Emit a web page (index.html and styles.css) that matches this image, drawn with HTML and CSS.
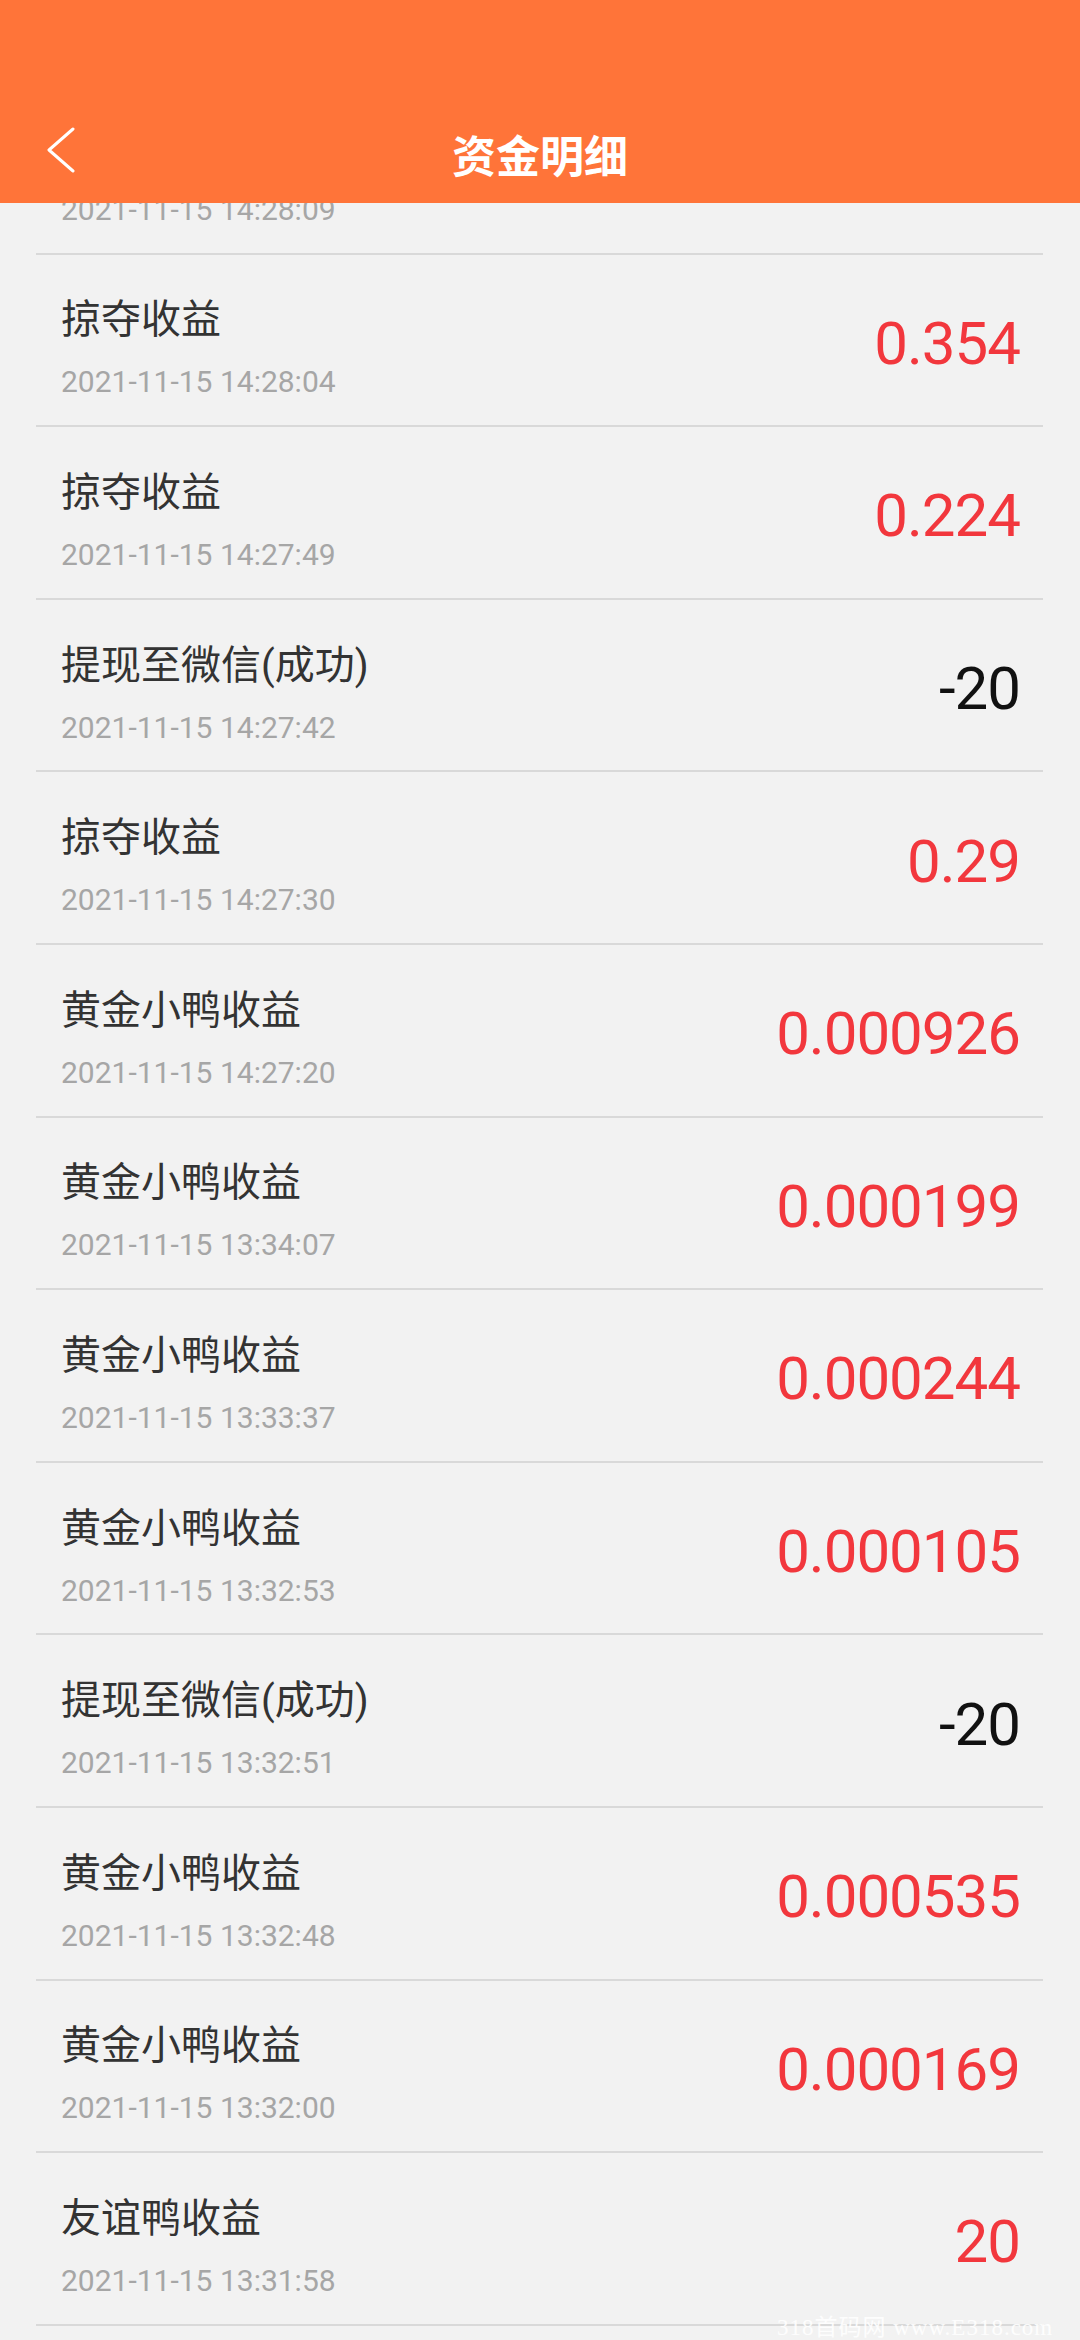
FILE: index.html
```html
<!DOCTYPE html>
<html lang="zh-CN">
<head>
  <meta charset="UTF-8">
  <meta name="viewport" content="width=device-width, initial-scale=1.0">
  <title>资金明细</title>
  <link rel="stylesheet" href="styles.css">
</head>
<body>

<!-- Top bar -->
<header class="header">
  <div class="nav-bar">
    <div class="back">
      <svg width="30" height="46" viewBox="0 0 30 46">
        <polyline points="27,2 3,23 27,44" fill="none" stroke="#fff" stroke-width="3" stroke-linecap="round" stroke-linejoin="round"/>
      </svg>
    </div>
    <h1 class="title">资金明细</h1>
    <div></div>
  </div>
</header>

<!-- Records list (scrolled) -->
<div class="scroll">
  <ul class="list">
    <li class="row">
      <div class="info"><div class="name">掠夺收益</div><div class="time">2021-11-15 14:28:09</div></div>
      <div class="amount plus">0.312</div>
    </li>
    <li class="row">
      <div class="info"><div class="name">掠夺收益</div><div class="time">2021-11-15 14:28:04</div></div>
      <div class="amount plus">0.354</div>
    </li>
    <li class="row">
      <div class="info"><div class="name">掠夺收益</div><div class="time">2021-11-15 14:27:49</div></div>
      <div class="amount plus">0.224</div>
    </li>
    <li class="row">
      <div class="info"><div class="name">提现至微信(成功)</div><div class="time">2021-11-15 14:27:42</div></div>
      <div class="amount">-20</div>
    </li>
    <li class="row">
      <div class="info"><div class="name">掠夺收益</div><div class="time">2021-11-15 14:27:30</div></div>
      <div class="amount plus">0.29</div>
    </li>
    <li class="row">
      <div class="info"><div class="name">黄金小鸭收益</div><div class="time">2021-11-15 14:27:20</div></div>
      <div class="amount plus">0.000926</div>
    </li>
    <li class="row">
      <div class="info"><div class="name">黄金小鸭收益</div><div class="time">2021-11-15 13:34:07</div></div>
      <div class="amount plus">0.000199</div>
    </li>
    <li class="row">
      <div class="info"><div class="name">黄金小鸭收益</div><div class="time">2021-11-15 13:33:37</div></div>
      <div class="amount plus">0.000244</div>
    </li>
    <li class="row">
      <div class="info"><div class="name">黄金小鸭收益</div><div class="time">2021-11-15 13:32:53</div></div>
      <div class="amount plus">0.000105</div>
    </li>
    <li class="row">
      <div class="info"><div class="name">提现至微信(成功)</div><div class="time">2021-11-15 13:32:51</div></div>
      <div class="amount">-20</div>
    </li>
    <li class="row">
      <div class="info"><div class="name">黄金小鸭收益</div><div class="time">2021-11-15 13:32:48</div></div>
      <div class="amount plus">0.000535</div>
    </li>
    <li class="row">
      <div class="info"><div class="name">黄金小鸭收益</div><div class="time">2021-11-15 13:32:00</div></div>
      <div class="amount plus">0.000169</div>
    </li>
    <li class="row">
      <div class="info"><div class="name">友谊鸭收益</div><div class="time">2021-11-15 13:31:58</div></div>
      <div class="amount plus">20</div>
    </li>
    <li class="row">
      <div class="info"><div class="name">黄金小鸭收益</div><div class="time">2021-11-15 13:31:40</div></div>
      <div class="amount plus">0.000212</div>
    </li>
  </ul>
</div>

<div class="watermark">318首码网 www.E318.com</div>

</body>
</html>
```

FILE: styles.css
```css
/* General Reset */
* {
    margin: 0;
    padding: 0;
    box-sizing: border-box;
}

body {
    font-family: 'Roboto', 'Noto Sans CJK SC', sans-serif;
    background-color: #f2f2f2;
    width: 1080px;
    height: 2340px;
    overflow: hidden;
    position: relative;
}

/* Header */
.header {
    height: 203px;
    background-color: #ff7439;
    padding-top: 105px;
}

.nav-bar {
    height: 98px;
    display: grid;
    grid-template-columns: 1fr auto 1fr;
    align-items: center;
}

.back {
    padding-left: 46px;
    display: flex;
    align-items: center;
    margin-top: -8px;
}

.title {
    font-family: 'Noto Sans CJK SC', sans-serif;
    font-size: 44px;
    font-weight: 700;
    color: #fff;
    line-height: 1;
}

/* List */
.scroll {
    height: 2137px;
    overflow: hidden;
}

.list {
    list-style: none;
    margin-top: -121px;
}

.row {
    height: 172.6px;
    margin: 0 37px 0 36px;
    padding: 0 23px 0 25px;
    border-bottom: 2px solid #d9d9d9;
    display: flex;
    justify-content: space-between;
    align-items: center;
}

.info {
    display: flex;
    flex-direction: column;
    gap: 27px;
    margin-top: 18px;
}

.name {
    font-size: 40px;
    line-height: 40px;
    color: #333;
}

.time {
    font-size: 30px;
    line-height: 30px;
    color: #a6a6a6;
}

.amount {
    font-size: 60px;
    line-height: 1;
    letter-spacing: -1px;
    color: #111;
    margin-top: 8px;
}

.amount.plus {
    color: #f2373d;
}

/* Site watermark */
.watermark {
    position: absolute;
    left: 777px;
    bottom: 0;
    font-family: 'Liberation Serif', 'Noto Sans CJK SC', serif;
    font-size: 23px;
    line-height: 24px;
    letter-spacing: 1px;
    color: rgba(255, 255, 255, 0.9);
    white-space: nowrap;
}
```
